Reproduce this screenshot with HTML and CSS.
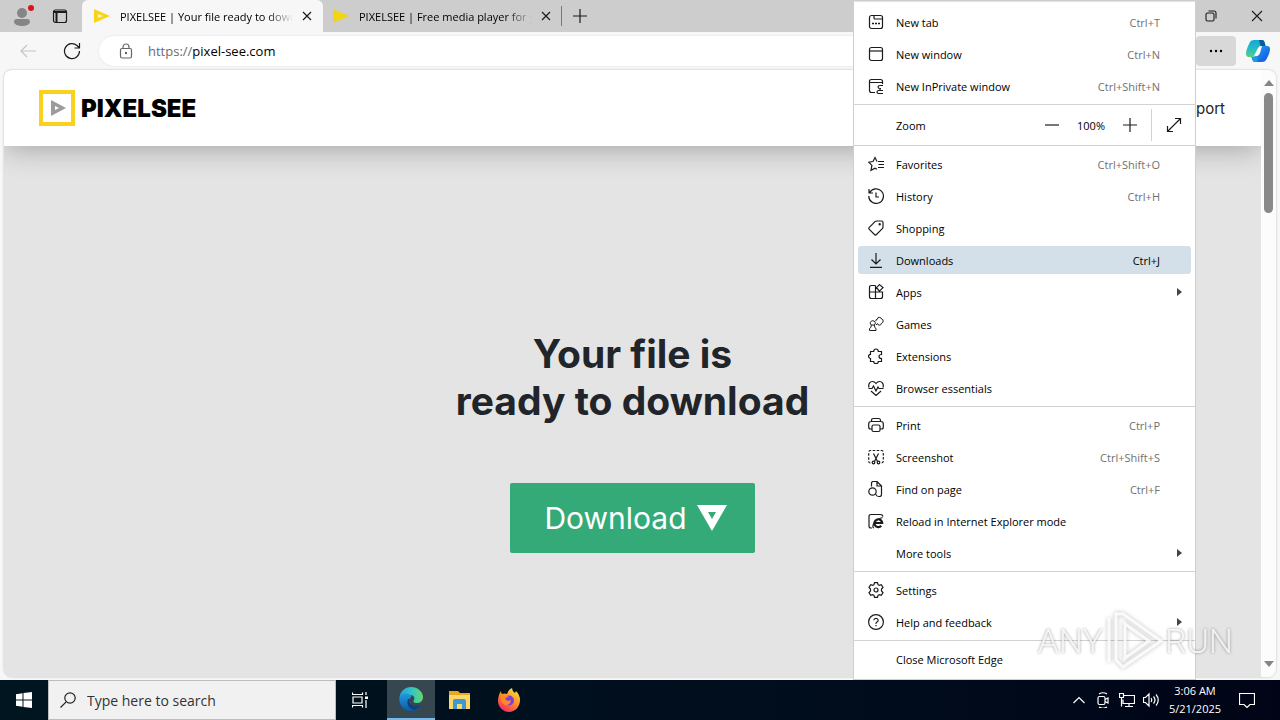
FILE: index.html
```html
<!DOCTYPE html>
<html lang="en">
<head>
  <meta charset="UTF-8" />
  <meta name="viewport" content="width=device-width, initial-scale=1.0"/>
  <title>PIXELSEE | Your file ready to download</title>
  <link rel="stylesheet" href="styles.css">
</head>
<body>

  <div class="browser">

    <!-- tab strip -->
    <div class="tab-strip">
      <button class="profile" aria-label="Profile">
        <svg width="20" height="22" viewBox="0 0 20 22"><circle cx="8" cy="8" r="5" fill="#858585"/><path d="M0 16.500q0-2.500 3-2.500h10q3 0 3 2.500c0 3-4 4.500-8 4.500s-8-1.500-8-4.500z" fill="#858585"/><circle cx="17" cy="3" r="3" fill="#d9141e"/></svg>
      </button>
      <button class="tab-actions" aria-label="Tab actions">
        <svg class="icon" viewBox="0 0 16 16"><rect x="1.500" y="2" width="13" height="12.500" rx="2"/><path d="M2 4h12M4.500 4v10" stroke-width="2"/></svg>
      </button>
      <div class="tab active">
        <svg class="favicon" viewBox="0 0 16 16"><path d="M0 1l16 7L0 15z" fill="#f7d417"/><path d="M4 6l5 2-5 2z" fill="#fff6b8"/></svg>
        <span class="tab-title">PIXELSEE | Your file ready to download</span>
        <button class="tab-close" aria-label="Close tab"><svg viewBox="0 0 10 10"><path d="M1 1l8 8M9 1L1 9"/></svg></button>
      </div>
      <div class="tab">
        <svg class="favicon" viewBox="0 0 16 16"><path d="M0 1l16 7L0 15z" fill="#f2d516"/></svg>
        <span class="tab-title">PIXELSEE | Free media player for you</span>
        <button class="tab-close" aria-label="Close tab"><svg viewBox="0 0 10 10"><path d="M1 1l8 8M9 1L1 9"/></svg></button>
      </div>
      <button class="new-tab" aria-label="New tab"><svg class="icon" viewBox="0 0 16 16"><path d="M8 1v14M1 8h14"/></svg></button>
      <div class="window-buttons">
        <button aria-label="Restore"><svg viewBox="0 0 12 12"><rect x="1" y="3" width="8" height="8" rx="1.500"/><path d="M3.500 1H9q2 0 2 2v5.500"/></svg></button>
        <button aria-label="Close"><svg viewBox="0 0 12 12"><path d="M1 1l10 10M11 1L1 11"/></svg></button>
      </div>
    </div>

    <!-- toolbar -->
    <div class="toolbar">
      <button class="tool disabled" aria-label="Back"><svg class="icon" viewBox="0 0 16 16"><path d="M16 8H1M7 2L1 8l6 6"/></svg></button>
      <button class="tool" aria-label="Refresh"><svg class="icon reload" viewBox="0 0 18 18"><path d="M16.500 9A7.500 7.500 0 1 1 14 3.500L16 5.500M16.500 1v5h-5"/></svg></button>
      <div class="address">
        <svg class="icon lock" viewBox="0 0 16 16"><rect x="2.500" y="5.500" width="11" height="9.500" rx="1.500"/><path d="M5 5.500V4a3 3 0 0 1 6 0v1.500"/><circle cx="8" cy="10" r=".6"/></svg>
        <label for="url">https://</label>
        <input type="text" id="url" value="pixel-see.com" />
      </div>
      <button class="more" aria-label="Settings and more"><svg viewBox="0 0 16 4"><circle cx="3" cy="2" r="1.200"/><circle cx="8" cy="2" r="1.200"/><circle cx="13" cy="2" r="1.200"/></svg></button>
      <button class="copilot" aria-label="Copilot">
        <svg width="24" height="24" viewBox="0 0 24 24">
          <defs>
            <linearGradient id="cpA" x1="0" y1="0" x2="0" y2="1"><stop offset="0" stop-color="#16a7dc"/><stop offset=".55" stop-color="#27bfc0"/><stop offset="1" stop-color="#55cf82"/></linearGradient>
            <linearGradient id="cpB" x1="0" y1="0" x2="1" y2="1"><stop offset="0" stop-color="#24a9f5"/><stop offset="1" stop-color="#144fe0"/></linearGradient>
          </defs>
          <path d="M8 1h8q2 0 2.500 2l1 4h-4q-2 0-3 2l-3 7q-1 2-3 2H3q-3 0-3-3c0-4 2-8 4-12q1-2 4-2z" fill="url(#cpA)"/>
          <path d="M13 1h3q2 0 2.500 2l1 4h-5z" fill="#11579d"/>
          <path d="M16 23H9q-2 0-2.500-2l-1-3h2q2 0 3-2l3-7q1-2 3-2H21q3 0 3 3c0 4-2 7-4 11q-1 2-4 2z" fill="url(#cpB)"/>
          <path d="M5.500 18h2q2 0 3-2l1-2v7q0 2-1 2H9q-2 0-2.500-2z" fill="#1b9ce5"/>
          <path d="M12 9l-4 8h3q2 0 3-3l2-7q-3 0-4 2z" fill="#fff"/>
        </svg>
      </button>
    </div>

    <!-- web page -->
    <div class="viewport">
      <div class="page">
        <header class="site-header">
          <a class="brand" href="#">
            <svg width="36" height="36" viewBox="0 0 36 36"><rect x="2" y="2" width="32" height="32" fill="none" stroke="#f8d21c" stroke-width="4"/><path d="M12 10l15 8-15 8z" fill="#9c9c9c"/><path d="M16 16l4 2-4 2z" fill="#fff"/></svg>
            <span>PIXELSEE</span>
          </a>
          <a class="nav-link" href="#">Support</a>
        </header>
        <main class="hero">
          <h1>Your file is<br>ready to download</h1>
          <button class="download-btn">
            <span>Download</span>
            <svg width="30" height="26" viewBox="0 0 30 26"><path d="M0 0h30L15 26z" fill="#fff"/><path d="M11 7h8l-4 7z" fill="#34aa79"/></svg>
          </button>
        </main>
      </div>
      <div class="scrollbar">
        <span class="arrow-up"></span>
        <span class="thumb"></span>
        <span class="arrow-down"></span>
      </div>
    </div>

    <!-- settings and more menu -->
    <nav class="menu">
      <button class="item"><svg class="icon" viewBox="0 0 16 16"><rect x="1.500" y="1.500" width="13" height="13" rx="2"/><path d="M6 1.500V4q0 1 1 1h7.500"/><path d="M4 9.500h2M7 9.500h2M10 9.500h2" stroke-width="1.500"/></svg><span>New tab</span><kbd>Ctrl+T</kbd></button>
      <button class="item"><svg class="icon" viewBox="0 0 16 16"><rect x="1.500" y="1.500" width="13" height="13" rx="2"/><path d="M1.500 5h13"/></svg><span>New window</span><kbd>Ctrl+N</kbd></button>
      <button class="item"><svg class="icon" viewBox="0 0 16 16"><path d="M7 14.500H3.500q-2 0-2-2v-9q0-2 2-2h9q2 0 2 2V6M1.500 4.500h13M15 7.500h-3q-2 0-2 1.500t2 1.500h1M15 15.500h-4q-2 0-2-1.500t2-1.500h4M12 10.500v2"/></svg><span>New InPrivate window</span><kbd>Ctrl+Shift+N</kbd></button>
      <hr>
      <div class="zoom-row">
        <span class="zoom-label">Zoom</span>
        <button aria-label="Zoom out"><svg class="icon" viewBox="0 0 16 16"><path d="M1 8h14"/></svg></button>
        <span class="zoom-value">100%</span>
        <button aria-label="Zoom in"><svg class="icon" viewBox="0 0 16 16"><path d="M8 1v14M1 8h14"/></svg></button>
        <button class="fullscreen" aria-label="Full screen"><svg class="icon" viewBox="0 0 16 16"><path d="M1.500 14.500l13-13M9 1.500h5.500V7M1.500 9v5.500H7"/></svg></button>
      </div>
      <hr>
      <button class="item"><svg class="icon" viewBox="0 0 16 16"><path d="M9 5.500L7 1.500 5 5.500.700 6.200l3.200 3.200-.9 5L7 12.200l2 1M10 5.500h6M10.500 8.500H16M10 11.500h6"/></svg><span>Favorites</span><kbd>Ctrl+Shift+O</kbd></button>
      <button class="item"><svg class="icon" viewBox="0 0 16 16"><path d="M1 1v4h4M1.500 5A7.300 7.300 0 1 1 .8 8M8 4.500V9h3"/></svg><span>History</span><kbd>Ctrl+H</kbd></button>
      <button class="item"><svg class="icon" viewBox="0 0 16 16"><path d="M9 1h4.500q1.500 0 1.500 1.500V7q0 1-.7 1.700L8.500 14.500q-1 1-2 0L1.300 9.300q-1-1 0-2L7 1.600Q7.800 1 9 1z"/><circle cx="11.700" cy="4.300" r=".6"/></svg><span>Shopping</span></button>
      <button class="item selected"><svg class="icon" viewBox="0 0 16 16"><path d="M8 1v11M3.500 7.500L8 12l4.500-4.500M2 15.300h12"/></svg><span>Downloads</span><kbd>Ctrl+J</kbd></button>
      <button class="item"><svg class="icon" viewBox="0 0 16 16"><path d="M7.500 1.500h-4q-2 0-2 2v9q0 2 2 2h9q2 0 2-2V8H1.500M7.500 1.500v13M11.500.600l3.500 3-3.500 3.500L8.500 3.700z"/></svg><span>Apps</span><i class="sub-arrow"></i></button>
      <button class="item"><svg class="icon thin" viewBox="0 0 16 16"><path d="M1.500 14.500h6.500v-2l-1.200-1-.6-2.500q1.600-.8 1-2.700-.8-1.600-2.400-1.600T2.400 6.300q-.6 1.900 1 2.700l-.6 2.500-1.300 1zM3.400 9h2.800"/><path d="M7.800 5.200q-.3-1.700 1.500-2 .2-1.900 2-1.900t2.200 1.700q1.800.2 1.700 2t-1.600 2.200q-.4 1.900-2.200 1.900T9.500 7.600L8 9"/></svg><span>Games</span></button>
      <button class="item"><svg class="icon" viewBox="0 0 16 16"><path d="M2.500 3.500h3.200q0-2.500 2.300-2.500t2.300 2.500h3.200V6.500q-2.500 0-2.500 2t2.500 2v3h-3.200q0 2.200-2.300 2.200t-2.300-2.200H2.500v-3Q.5 10 .5 8.300t2-2z"/></svg><span>Extensions</span></button>
      <button class="item"><svg class="icon" viewBox="0 0 16 16"><path d="M1 7.500C0 4 2 1.500 4.500 1.500q2 0 3.500 2 1.500-2 3.500-2C14 1.500 16 4 15 7.500M.500 8.500H4L5.500 6l2.500 5 2-4 1 1.500h4.500M3 11l5 4.500 5-4.500"/></svg><span>Browser essentials</span></button>
      <hr>
      <button class="item"><svg class="icon" viewBox="0 0 16 16"><path d="M4 12H2.500Q.7 12 .7 10V7Q.7 4.500 3 4.500h10q2.300 0 2.300 2.500v3q0 2-1.800 2H12M3.500 4.500v-1q0-2 2-2h5q2 0 2 2v1"/><rect x="4" y="8" width="8" height="6.500" rx="1.500"/></svg><span>Print</span><kbd>Ctrl+P</kbd></button>
      <button class="item"><svg class="icon" viewBox="0 0 16 16"><path d="M2.500 14Q.7 14 .7 12V3.500q0-2 2-2h10.600q2 0 2 2V12q0 2-1.800 2" stroke-dasharray="2.500 1.500"/><path d="M5.500 4.500l4 8M10.500 4.500l-4 8"/><circle cx="5.500" cy="13.500" r="1.300"/><circle cx="10.500" cy="13.500" r="1.300"/></svg><span>Screenshot</span><kbd>Ctrl+Shift+S</kbd></button>
      <button class="item"><svg class="icon" viewBox="0 0 16 16"><path d="M3.500 5.500v-3q0-2 2-2H9L13.500 5v8.500q0 2-2 2H10M9 .500V5h4.500M7.500 13l2 2.500"/><circle cx="4.500" cy="10.500" r="3.700"/></svg><span>Find on page</span><kbd>Ctrl+F</kbd></button>
      <button class="item"><svg class="icon" viewBox="0 0 16 16"><path d="M4 15H3q-2 0-2-2V3.500q0-2 2-2h9.500q2 0 2.500 2"/><path d="M6.500 10h7.700a3.900 3.900 0 1 0-1 2.800" stroke-width="2.200"/><path d="M6 15q-2-.5-.5-4Q8 6.500 14.500 4.500" stroke-width="1.200"/></svg><span>Reload in Internet Explorer mode</span></button>
      <button class="item"><span class="no-icon">More tools</span><i class="sub-arrow"></i></button>
      <hr>
      <button class="item"><svg class="icon" viewBox="0 0 16 16"><path d="M6.500.700h3l.5 2 1.300.7 2-.6L15 5.500 13.500 7v2l1.500 1.500-1.700 2.700-2-.6-1.300.7-.5 2h-3l-.5-2-1.300-.7-2 .6L1 10.500 2.500 9V7L1 5.500l1.700-2.700 2 .6L6 2.700z"/><circle cx="8" cy="8" r="2"/></svg><span>Settings</span></button>
      <button class="item"><svg class="icon" viewBox="0 0 16 16"><circle cx="8" cy="8" r="7.400"/><path d="M5.800 6.300q.2-2 2.200-2t2.200 2q0 1-1.200 1.800T8 9.800M8 11v1.200"/></svg><span>Help and feedback</span><i class="sub-arrow"></i></button>
      <hr>
      <button class="item"><span class="no-icon">Close Microsoft Edge</span></button>
    </nav>

    <!-- recording watermark -->
    <div class="watermark">
      <span>ANY</span>
      <svg width="58" height="62" viewBox="0 0 58 62"><path d="M4 8v44M11 4v46l7 7 38-26L18 4zM20 14v34l24-17z"/></svg>
      <span>RUN</span>
    </div>
  </div>

  <footer class="taskbar">
    <button class="start" aria-label="Start"><svg width="16" height="16" viewBox="0 0 16 16"><path d="M0 2.200L6.500 1.300v6.200H0zM7.500 1.100L16 0v7.500H7.500zM0 8.500h6.500v6.200L0 13.800zM7.500 8.500H16V16l-8.500-1.100z" fill="#fff"/></svg></button>
    <label class="search" for="search">
      <svg class="icon" viewBox="0 0 16 16"><circle cx="10" cy="6" r="5.200"/><path d="M6.200 9.800L.5 15.500"/></svg>
      <input type="text" id="search" placeholder="Type here to search" />
    </label>
    <button class="task task-view" aria-label="Task view"><svg class="icon" viewBox="0 0 16 16"><path d="M.500.500v2h10v-2M.500 15.500v-2h10v2M1 5h9v6H1zM14 0v3M14 8v8"/><path d="M13 4.500h3v2.500h-3z" fill="#fff" stroke="none"/></svg></button>
    <button class="task running" aria-label="Microsoft Edge">
      <svg width="24" height="24" viewBox="0 0 24 24">
        <defs>
          <linearGradient id="edA" x1="0" y1="0" x2="1" y2="0"><stop offset="0" stop-color="#279fe0"/><stop offset=".5" stop-color="#31c3c8"/><stop offset="1" stop-color="#65da68"/></linearGradient>
          <linearGradient id="edB" x1="0" y1="0" x2="0" y2="1"><stop offset="0" stop-color="#239be0"/><stop offset="1" stop-color="#0c59a4"/></linearGradient>
        </defs>
        <path d="M.500 11C1 4 6 0 12 0c7 0 12 5 12 10 0 4-3 6-6 6-4 0-4-2-3-3 1-2 0-5-4-5C6 8 2 9 .500 11z" fill="url(#edA)"/>
        <path d="M.500 11C2 6 7 5.500 10 7c2 1 3 2 2 3-3 3-1 9 4 10 2 .5 4 0 6-1-2 3-5 5-10 5C5 24-.5 18 .500 11z" fill="url(#edB)"/>
        <path d="M9 12c-2 5 1 10 6 11 4-1 6-3 7-4.500-3 1.500-7 1-9-.5-3-2-3-4-2-6z" fill="#123f78"/>
      </svg>
    </button>
    <button class="task" aria-label="File Explorer"><svg width="22" height="20" viewBox="0 0 22 20"><path d="M0 1h9l2 2h10v15H0z" fill="#e9a621"/><path d="M0 5h21v14H0z" fill="#fcd667"/><path d="M4 19v-8q0-2 2-2h9q2 0 2 2v8h-4v-5H8v5z" fill="#3f98d3"/></svg></button>
    <button class="task" aria-label="Firefox">
      <svg width="24" height="24" viewBox="0 0 24 24">
        <defs><linearGradient id="ff" x1=".8" y1="0" x2=".2" y2="1"><stop offset="0" stop-color="#ffe23c"/><stop offset=".45" stop-color="#ff9328"/><stop offset="1" stop-color="#f0206e"/></linearGradient></defs>
        <path d="M4 3q0 2 1 3 2-1 5 0 1-4 5-6 0 3 3 5l1-2q4 4 4 9c0 7-5 12-11 12S1 19 1 13c0-4 1-7 3-10z" fill="url(#ff)"/>
        <circle cx="12" cy="12.500" r="5" fill="#7b3fe0"/>
        <path d="M4 8q4-2 8 1-3 0-4 2 2 3 6 1-1 6-6 5-5-3-4-9z" fill="#ff8a22"/>
      </svg>
    </button>
    <div class="tray">
      <svg class="icon caret" viewBox="0 0 12 16"><path d="M.500 11L6 5.500l5.500 5.500"/></svg>
      <svg class="icon" viewBox="0 0 16 16"><rect x="3" y="4.500" width="7" height="8" rx="1.500"/><path d="M10 7.500l3-1.500v5l-3-1.500M4 2q4-2.500 8 0M4 15q4 2.500 8 0"/></svg>
      <svg class="icon" viewBox="0 0 16 16"><path d="M5 3.500h10.500v8H4v-4M10 11.500v3M6 14.500h8M.500 1.500h4v4h-4zM2.500 5.500v9"/></svg>
      <svg class="icon" viewBox="0 0 16 16"><path d="M.500 5.500h2L6 2v12l-3.500-3.500h-2zM8 6q1.500 2 0 4M10.500 4.500q3 3.500 0 7M13 2.500q4.500 5.500 0 11"/></svg>
      <div class="clock"><span>3:06 AM</span><span>5/21/2025</span></div>
      <svg class="icon" viewBox="0 0 16 16"><path d="M.500 1.500h15v11H11l-3 3-3-3H.500z"/></svg>
    </div>
  </footer>

</body>
</html>
```

FILE: styles.css
```css
* {
  box-sizing: border-box;
  margin: 0;
  padding: 0;
}

body {
  font-family: "Open Sans", "Noto Sans", sans-serif;
  font-size: 11px;
  color: #000;
  display: flex;
  flex-direction: column;
  height: 100vh;
  overflow: hidden;
}

button, input {
  font: inherit;
  color: inherit;
  background: none;
  border: none;
  outline: none;
}

button {
  display: flex;
  align-items: center;
  justify-content: center;
}

svg {
  flex: none;
}

.icon {
  width: 16px;
  height: 16px;
  fill: none;
  stroke: #1b1b1b;
  stroke-width: 1.2;
}

.icon.thin {
  stroke-width: 1;
}

.browser {
  position: relative;
  flex: 1;
  min-height: 0;
  display: flex;
  flex-direction: column;
  background-color: #f7f7f7;
}

/* tab strip */
.tab-strip {
  display: flex;
  height: 32px;
  background-color: #cdcdcd;
}

.profile {
  width: 44px;
  padding-left: 4px;
}

.tab-actions {
  width: 38px;
  padding-right: 6px;
}

.tab {
  display: flex;
  align-items: center;
  width: 241px;
  padding: 0 6px 0 12px;
}

.tab.active {
  background-color: #f7f7f7;
  border-radius: 6px 6px 0 0;
}

.tab:not(.active) {
  width: 239px;
  padding-left: 10px;
  background: linear-gradient(#777, #777) right center / 1px 20px no-repeat;
}

.favicon {
  width: 16px;
  height: 16px;
  margin-right: 10px;
}

.tab-title {
  flex: 1;
  overflow: hidden;
  white-space: nowrap;
  -webkit-mask-image: linear-gradient(to right, #000 85%, transparent);
  mask-image: linear-gradient(to right, #000 85%, transparent);
}

.tab-close {
  width: 20px;
  height: 20px;
  margin-left: 4px;
}

.tab-close svg {
  width: 10px;
  height: 10px;
  stroke: #1b1b1b;
  stroke-width: 1.2;
}

.new-tab {
  width: 36px;
}

.window-buttons {
  display: flex;
  margin-left: auto;
}

.window-buttons button {
  width: 46px;
}

.window-buttons svg {
  width: 12px;
  height: 12px;
  fill: none;
  stroke: #1b1b1b;
  stroke-width: 1.1;
}

/* toolbar */
.toolbar {
  display: flex;
  align-items: center;
  height: 38px;
  padding: 0 8px 0 6px;
}

.tool {
  width: 44px;
  height: 30px;
}

.disabled .icon {
  stroke: #c4c4c4;
}

.icon.reload {
  width: 18px;
  height: 18px;
}

.address {
  flex: 1;
  display: flex;
  align-items: center;
  height: 30px;
  margin: 0 120px 0 5px;
  padding-left: 19px;
  border-radius: 15px;
  background-color: #fff;
  box-shadow: 0 0 2px rgba(0, 0, 0, 0.12);
  font-size: 13px;
}

.address label {
  margin-left: 14px;
  color: #6b6b6b;
}

.address input {
  flex: 1;
}

.icon.lock {
  stroke: #666;
}

.more {
  width: 40px;
  height: 30px;
  border-radius: 4px;
  background-color: #d8d8d8;
}

.more svg {
  width: 16px;
  height: 4px;
}

.copilot {
  width: 36px;
  padding-left: 8px;
}

/* web page */
.viewport {
  flex: 1;
  min-height: 0;
  display: flex;
  margin: 0 4px 3px;
  border-radius: 8px;
  overflow: hidden;
  box-shadow: 0 0 2px rgba(0, 0, 0, 0.3);
}

.page {
  flex: 1;
  background-color: #e4e4e4;
}

.site-header {
  display: flex;
  align-items: center;
  justify-content: space-between;
  height: 76px;
  padding: 0 36px 0 35px;
  background-color: #fff;
  box-shadow: 0 2px 30px rgba(0, 0, 0, 0.3);
  font-family: Inter, sans-serif;
}

.brand {
  display: flex;
  align-items: center;
  gap: 6px;
  color: #000;
  font-size: 24px;
  font-weight: 900;
  text-decoration: none;
}

.nav-link {
  color: #222;
  font-size: 15px;
  text-decoration: none;
}

.hero {
  display: flex;
  flex-direction: column;
  align-items: center;
  gap: 59px;
  padding-top: 184px;
  font-family: Inter, sans-serif;
}

.hero h1 {
  color: #212529;
  font-size: 39px;
  font-weight: 700;
  line-height: 47px;
  text-align: center;
}

.download-btn {
  gap: 10px;
  height: 70px;
  padding: 0 28px 0 34px;
  border-radius: 2px;
  background-color: #34aa79;
  color: #fff;
  font-size: 30px;
}

.scrollbar {
  display: flex;
  flex-direction: column;
  align-items: center;
  width: 15px;
  padding: 10px 0;
  background-color: #fcfcfc;
}

.arrow-up, .arrow-down {
  border: 5px solid transparent;
}

.arrow-up {
  border-top: none;
  border-bottom: 6px solid #858585;
}

.arrow-down {
  margin-top: auto;
  border-bottom: none;
  border-top: 6px solid #858585;
}

.thumb {
  width: 9px;
  height: 120px;
  margin-top: 7px;
  border-radius: 5px;
  background-color: #898989;
}

/* menu */
.menu {
  position: absolute;
  top: 1px;
  right: 84px;
  bottom: 0;
  display: flex;
  flex-direction: column;
  width: 343px;
  padding: 4px 0;
  background-color: #fff;
  border: 1px solid #cfcfcf;
  border-top-color: #e2e2e2;
}

.menu hr {
  border: none;
  border-top: 1px solid #d2d2d2;
  margin: 2px 0;
}

.item {
  flex: none;
  height: 28px;
  margin: 2px 4px;
  padding: 0 31px 0 10px;
  border-radius: 3px;
  justify-content: flex-start;
  gap: 12px;
}

.item kbd {
  margin-left: auto;
  font-family: inherit;
  color: #707070;
}

.item .no-icon {
  margin-left: 28px;
}

.item.selected {
  background-color: #d3e0ea;
}

.item.selected kbd {
  color: #000;
}

.sub-arrow {
  margin-left: auto;
  margin-right: -22px;
  border: 4px solid transparent;
  border-right: none;
  border-left: 5px solid #444;
}

.zoom-row {
  flex: none;
  display: flex;
  align-items: center;
  height: 36px;
}

.zoom-label {
  flex: 1;
  padding-left: 42px;
}

.zoom-row button {
  width: 36px;
  height: 32px;
}

.zoom-value {
  width: 42px;
  text-align: center;
}

.zoom-row .fullscreen {
  width: 44px;
  margin-left: 3px;
  border-left: 1px solid #d2d2d2;
}

.watermark {
  position: absolute;
  right: 47px;
  bottom: 8px;
  display: flex;
  align-items: center;
  gap: 2px;
  font-family: Roboto, sans-serif;
  font-size: 34px;
  font-weight: 300;
  color: rgba(255, 255, 255, 0.85);
  text-shadow: 0 0 3px rgba(0, 0, 0, 0.4);
  pointer-events: none;
}

.watermark svg {
  fill: none;
  stroke: rgba(255, 255, 255, 0.85);
  stroke-width: 3;
  filter: drop-shadow(0 0 2px rgba(0, 0, 0, 0.3));
}

/* taskbar */
.taskbar {
  display: flex;
  height: 40px;
  background: linear-gradient(to right, #001520, #000c1c 70%, #000416);
  color: #fff;
}

.taskbar .icon {
  stroke: #fff;
}

.start, .task {
  width: 48px;
}

.task {
  margin-right: 1px;
}

.task-view {
  padding-right: 4px;
}

.task.running {
  background-color: #36474f;
  border-bottom: 2px solid #76b9ed;
}

.search {
  display: flex;
  align-items: center;
  gap: 11px;
  width: 288px;
  margin-right: 2px;
  padding-left: 11px;
  background-color: #f1f1f1;
  border: 1px solid #bdbdbd;
  color: #333;
  font-size: 14px;
}

.search input {
  flex: 1;
}

.search input::placeholder {
  color: #333;
}

.taskbar .search .icon {
  stroke: #222;
}

.tray {
  display: flex;
  align-items: center;
  gap: 8px;
  margin-left: auto;
  padding-right: 25px;
}

.tray .caret {
  width: 12px;
  margin-right: 2px;
}

.clock {
  display: flex;
  flex-direction: column;
  align-items: center;
  width: 56px;
  margin-right: 8px;
  line-height: 18px;
}
```
